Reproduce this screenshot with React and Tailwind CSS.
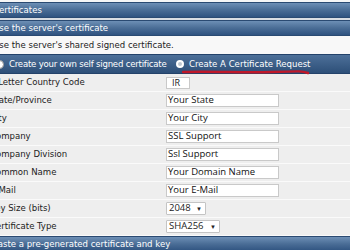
const rows = [
  { label: '2 Letter Country Code', value: 'IR', kind: 'short' },
  { label: 'State/Province', value: 'Your State' },
  { label: 'City', value: 'Your City' },
  { label: 'Company', value: 'SSL Support' },
  { label: 'Company Division', value: 'Ssl Support' },
  { label: 'Common Name', value: 'Your Domain Name' },
  { label: 'E-Mail', value: 'Your E-Mail' },
  { label: 'Key Size (bits)', value: '2048', kind: 'select', w: 'w-[40px]' },
  { label: 'Certificate Type', value: 'SHA256', kind: 'select', w: 'w-[54px]' },
];

function Header({ children, className = '' }) {
  return (
    <div
      className={`flex items-center h-[16px] pl-[1px] whitespace-nowrap text-white text-[9.5px] bg-gradient-to-b from-[#6d8fb5] via-[#4a6d96] to-[#2f5380] border-y border-[#2a4a72] ${className}`}
    >
      {children}
    </div>
  );
}

function Field({ row }) {
  if (row.kind === 'short') {
    return (
      <div className="h-[12px] w-[24px] bg-white border border-[#c9c9c9] flex items-center pl-[5px] text-[9px] text-[#222]">
        {row.value}
      </div>
    );
  }
  if (row.kind === 'select') {
    return (
      <div className={`h-[13px] ${row.w} bg-white border border-[#c4c4c4] rounded-[1px] flex items-center justify-between px-[2px] text-[9.5px] text-[#222]`}>
        <span>{row.value}</span>
        <span className="text-[6px] leading-none pr-[1px]">▼</span>
      </div>
    );
  }
  return (
    <div className="h-[13px] w-[113px] bg-white border border-[#c9c9c9] flex items-center pl-[1px] text-[9.5px] text-[#111]">
      {row.value}
    </div>
  );
}

export default function App() {
  return (
    <div
      className="w-[350px] h-[250px] overflow-hidden bg-[#f1f1f1]"
      style={{ fontFamily: '"DejaVu Sans Condensed", "DejaVu Sans", Verdana, sans-serif' }}
    >
      <div className="-ml-[8px] pt-[2px] bg-[#f6f6f6]">
        <Header>Certificates</Header>
        <div className="h-[2px] bg-[#d9dde2]" />
        <Header>Use the server's certificate</Header>
        <div className="h-[18px] flex items-center pl-[1px] whitespace-nowrap bg-[#f8f8f8] text-[9.5px] text-[#222]">
          Use the server's shared signed certificate.
        </div>
        <div className="relative h-[20px] flex items-center whitespace-nowrap text-[9.5px] text-white bg-gradient-to-b from-[#4d7099] to-[#2d4f78] border-y border-[#23426a]">
          <div className="flex items-center gap-[5px] w-[184px] pl-[3px] shrink-0 tracking-[-0.2px]">
            <span className="w-[9px] h-[9px] rounded-full bg-white border border-[#999] shrink-0" />
            <span>Create your own self signed certificate</span>
          </div>
          <div className="flex items-center gap-[5px]">
            <span className="w-[8px] h-[8px] rounded-full bg-[#bfc8d2] border-[2px] border-white shrink-0" />
            <span>Create A Certificate Request</span>
          </div>
          <svg className="absolute left-[190px] top-[14px]" width="128" height="6" viewBox="0 0 128 6">
            <path d="M1 3 C30 2 60 4 90 3 S120 2 126 4" stroke="#c0182a" strokeWidth="2.4" fill="none" strokeLinecap="round" />
          </svg>
        </div>
        {rows.map((row) => (
          <div key={row.label} className="h-[18px] flex items-center whitespace-nowrap border-b border-[#fafafa] bg-[#eeeeee] text-[9.5px] text-[#222]">
            <div className="w-[174px] -ml-[2px] pl-0 mr-[2px] shrink-0">{row.label}</div>
            <div style={{ fontFamily: '"Open Sans", "Noto Sans", sans-serif' }}>
              <Field row={row} />
            </div>
          </div>
        ))}
        <Header>Paste a pre-generated certificate and key</Header>
      </div>
    </div>
  );
}
